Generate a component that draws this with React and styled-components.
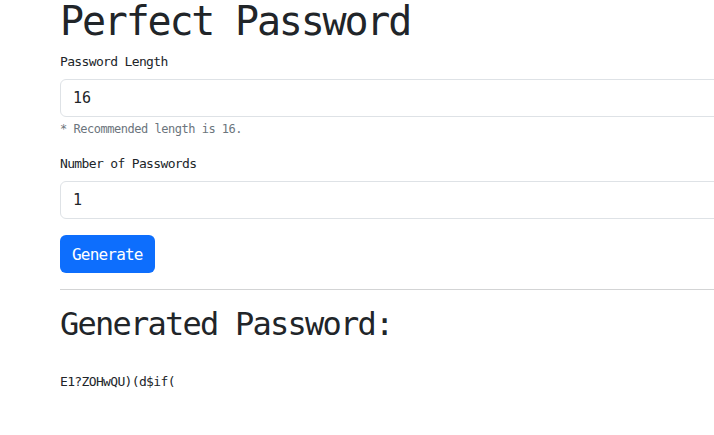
import React from 'react';
import styled, { createGlobalStyle } from 'styled-components';

const GlobalStyle = createGlobalStyle`
    html, body {
        margin: 0;
        padding: 0;
        background: #fff;
        overflow: hidden;
    }
    body {
        font-family: "DejaVu Sans Mono", "Liberation Mono", monospace;
        color: #212529;
    }
`

const Page = styled.div`
    padding: 0 0 0 60px;
`

const Title = styled.h1`
    margin: 0 0 7px;
    font-size: 40px;
    font-weight: 400;
    line-height: 46px;
    letter-spacing: -0.055em;
    transform: translateY(-2px);
`

const Field = styled.div`
    display: flex;
    flex-direction: column;
    align-items: flex-start;
    margin-right: -60px;
    margin-bottom: ${(p) => p.$gap || 0}px;
`

const Label = styled.label`
    font-size: 13px;
    letter-spacing: -0.05em;
    line-height: 18px;
    margin-bottom: 8px;
`

const Input = styled.input`
    box-sizing: border-box;
    height: 38px;
    width: 100%;
    padding: 0 12px;
    border: 1px solid #dee2e6;
    border-radius: 6px;
    font-family: inherit;
    font-size: 15px;
    color: #212529;
    background: #fff;
`

const Help = styled.div`
    margin-top: 4px;
    font-size: 12px;
    letter-spacing: -0.04em;
    line-height: 16px;
    color: #6c757d;
`

const Button = styled.button`
    height: 38px;
    padding: 0 12px;
    border: none;
    border-radius: 6px;
    background: #0d6efd;
    color: #fff;
    font-family: inherit;
    font-size: 16px;
    letter-spacing: -0.05em;
    cursor: pointer;
`

const Divider = styled.hr`
    margin: 16px 0 14px;
    border: none;
    border-top: 1px solid #d3d4d5;
`

const Subtitle = styled.h2`
    margin: 0 0 30px;
    font-size: 32px;
    font-weight: 400;
    line-height: 40px;
    letter-spacing: -0.055em;
`

const Result = styled.p`
    margin: 0;
    font-size: 13px;
    letter-spacing: -0.05em;
`

export default function App() {
    return (
        <Page>
            <GlobalStyle />
            <Title>Perfect Password</Title>
            <Field $gap={18}>
                <Label>Password Length</Label>
                <Input defaultValue="16" />
                <Help>* Recommended length is 16.</Help>
            </Field>
            <Field $gap={16}>
                <Label>Number of Passwords</Label>
                <Input defaultValue="1" />
            </Field>
            <Field>
                <Button>Generate</Button>
            </Field>
            <Divider />
            <Subtitle>Generated Password:</Subtitle>
            <Result>E1?ZOHwQU)(d$if(</Result>
        </Page>
    )
}
